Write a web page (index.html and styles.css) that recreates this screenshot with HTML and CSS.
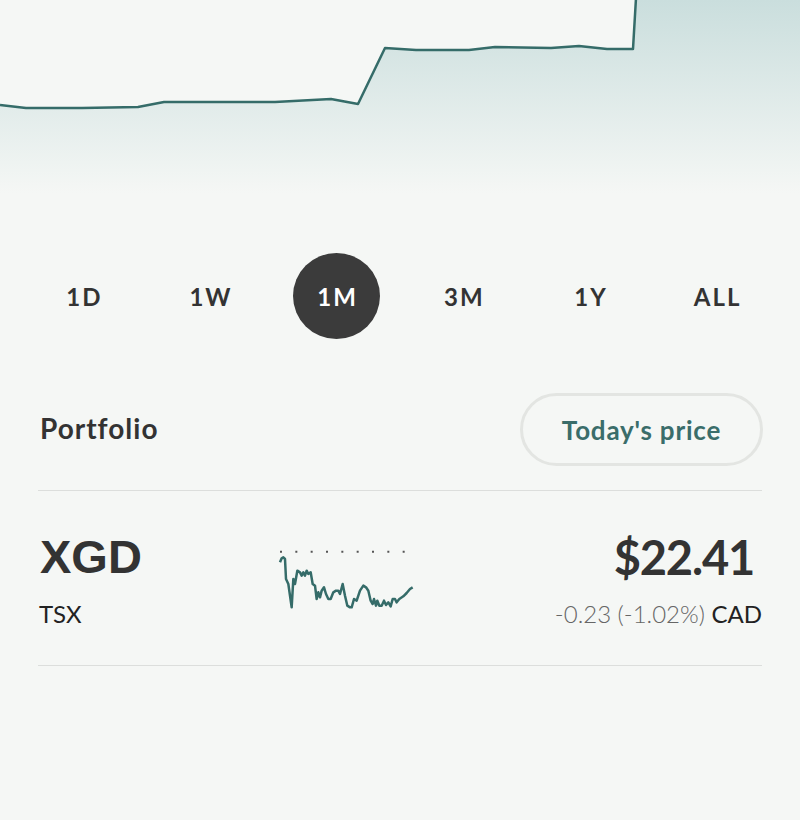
FILE: index.html
```html
<!DOCTYPE html>
<html lang="en">
  <head>
    <meta charset="UTF-8" />
    <meta name="viewport" content="width=device-width, initial-scale=1.0" />
    <title>XGD - Portfolio</title>
    <link rel="stylesheet" href="styles.css">
  </head>
  <body>
    <div class="chart">
      <svg width="800" height="200" viewBox="0 0 800 200">
        <defs>
          <linearGradient id="area" x1="0" y1="0" x2="0" y2="1">
            <stop offset="0" stop-color="#cadedd" />
            <stop offset="0.97" stop-color="#f5f7f5" />
          </linearGradient>
        </defs>
        <path
          class="area"
          d="M0,105 L26,108 L82,108 L138,107 L164,102 L275,102 L331,99 L358,104 L385,48 L416,50 L469,50 L495,47 L551,48 L579,46 L607,49 L633,49 L636,0 L800,0 L800,200 L0,200 Z"
        />
        <path
          class="line"
          d="M0,105 L26,108 L82,108 L138,107 L164,102 L275,102 L331,99 L358,104 L385,48 L416,50 L469,50 L495,47 L551,48 L579,46 L607,49 L633,49 L636,-2"
        />
      </svg>
    </div>

    <!-- periodos -->
    <div class="periods">
      <span class="period">1D</span>
      <span class="period">1W</span>
      <span class="period active">1M</span>
      <span class="period">3M</span>
      <span class="period">1Y</span>
      <span class="period">ALL</span>
    </div>

    <div class="content">
      <div class="section-head">
        <h2>Portfolio</h2>
        <button type="button" class="btn-price">Today's price</button>
      </div>

      <div class="holding">
        <div class="symbol">
          <div class="ticker">XGD</div>
          <div class="exchange">TSX</div>
        </div>

        <svg class="spark" width="170" height="90" viewBox="0 0 510 270">
          <line class="baseline" x1="60" y1="68" x2="440" y2="68" />
          <polyline
            class="spark-line"
            points="60,100 65,88 70,85 75,90 78,150 85,165 95,235 100,150 105,165 112,125 120,130 125,140 130,130 135,140 140,125 145,135 152,130 158,165 165,170 170,210 175,190 180,205 185,185 192,175 198,195 205,210 212,210 220,190 228,185 235,185 240,195 248,165 255,200 262,230 270,235 275,235 282,210 290,215 300,185 310,170 318,175 325,185 332,215 338,225 342,210 348,230 352,215 358,230 365,230 372,215 378,228 385,220 392,232 398,210 405,210 410,220 418,210 430,202 440,192 450,180 458,175"
          />
        </svg>

        <div class="quote">
          <div class="price">$22.41</div>
          <div class="change">-0.23 (-1.02%) <span class="currency">CAD</span></div>
        </div>
      </div>
    </div>
  </body>
</html>
```

FILE: styles.css
```css
* {
  margin: 0;
  padding: 0;
  box-sizing: border-box;
  font-family: Lato, "Open Sans", sans-serif;
}

body {
  background-color: #f5f7f5;
  color: #333;
  width: 800px;
}

.chart svg {
  display: block;
}

.chart .area {
  fill: url(#area);
}

.chart .line {
  fill: none;
  stroke: #356c69;
  stroke-width: 2.5;
  stroke-linejoin: round;
}

.periods {
  display: grid;
  grid-template-columns: repeat(6, 1fr);
  padding: 0 20px;
  margin-top: 53px;
}

.period {
  justify-self: center;
  width: 87px;
  height: 86px;
  border-radius: 50%;
  display: flex;
  justify-content: center;
  align-items: center;
  font-size: 24px;
  font-weight: bold;
  letter-spacing: 2px;
  padding-left: 2px;
  color: #333;
}

.period.active {
  background-color: #3b3b3b;
  color: #fff;
}

.content {
  padding: 0 38px;
}

.section-head {
  display: flex;
  justify-content: space-between;
  align-items: center;
  margin-top: 54px;
  padding-bottom: 24px;
  border-bottom: 1px solid #dcdedc;
}

.section-head h2 {
  font-size: 28px;
  font-weight: bold;
  letter-spacing: 1px;
  padding-left: 2px;
  padding-bottom: 3px;
  color: #333;
}

.btn-price {
  width: 243px;
  height: 73px;
  margin-right: -1px;
  border: 3px solid #e3e5e2;
  border-radius: 37px;
  background: none;
  color: #3a6d6a;
  font-size: 26px;
  font-weight: bold;
  letter-spacing: 0.8px;
  cursor: pointer;
}

.holding {
  display: grid;
  grid-template-columns: 222px 170px 1fr;
  align-items: start;
  padding: 38px 0 36px;
  border-bottom: 1px solid #dcdedc;
}

.ticker {
  font-family: "Liberation Sans", Arial, sans-serif;
  font-size: 47px;
  font-weight: bold;
  line-height: 56px;
  padding-left: 2px;
  color: #333;
}

.exchange {
  font-size: 24px;
  line-height: 30px;
  margin-top: 14px;
  padding-left: 1px;
  color: #222;
}

.spark {
  display: block;
}

.spark .baseline {
  stroke: #555;
  stroke-width: 6;
  stroke-dasharray: 6 40;
}

.spark .spark-line {
  fill: none;
  stroke: #356c69;
  stroke-width: 7.5;
  stroke-linejoin: round;
}

.quote {
  text-align: right;
}

.price {
  font-size: 47px;
  font-weight: bold;
  line-height: 56px;
  letter-spacing: -1.2px;
  padding-right: 8px;
  color: #333;
}

.change {
  font-size: 24px;
  font-weight: 300;
  line-height: 30px;
  margin-top: 14px;
  color: #666;
}

.change .currency {
  font-weight: 400;
  color: #222;
}
```
